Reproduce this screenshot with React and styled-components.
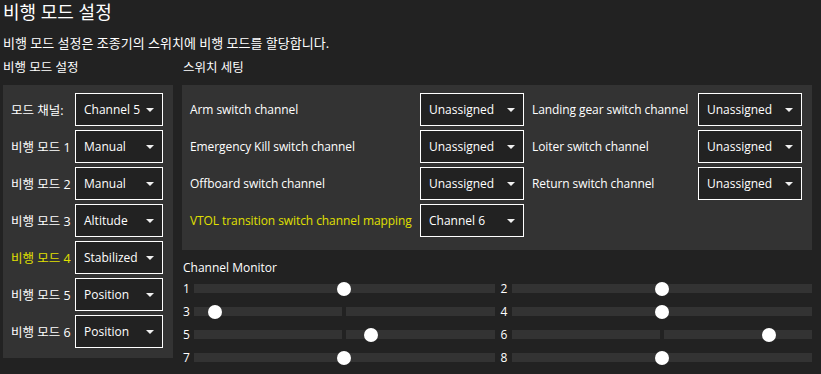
import React from "react";
import styled, { createGlobalStyle } from "styled-components";

const GlobalStyle = createGlobalStyle`
  body {
    margin: 0;
    background: #222222;
    color: #ffffff;
    font-family: "Open Sans", "Noto Sans CJK KR", sans-serif;
    font-size: 12px;
  }
`;

const Page = styled.div`
  padding: 0 3px;
`;

const Title = styled.h1`
  margin: 0;
  font-size: 18px;
  font-weight: 400;
  line-height: 24px;
`;

const Subtitle = styled.p`
  margin: 10px 0 7px;
  font-size: 13px;
  line-height: 18px;
`;

const Columns = styled.div`
  display: flex;
  gap: 9px;
  align-items: flex-start;
`;

const Column = styled.div`
  display: flex;
  flex-direction: column;
  width: ${(p) => p.$width}px;
`;

const SectionHeader = styled.div`
  font-size: 12.5px;
  line-height: 18px;
  margin-bottom: 8px;
  padding-left: ${(p) => (p.$indent ? 1 : 0)}px;
`;

const ModePanel = styled.div`
  background: #333333;
  padding: 8px 10px 10px 8px;
  display: grid;
  grid-template-columns: 1fr 88px;
  column-gap: 4px;
  row-gap: 4px;
  align-items: center;
`;

const SwitchPanel = styled.div`
  background: #333333;
  padding: 8px 10px 13px 8px;
  display: grid;
  grid-template-columns: 222px 104px 1fr 104px;
  column-gap: 8px;
  row-gap: 4px;
  align-items: center;
`;

const Label = styled.span`
  font-size: ${(p) => (p.$kr ? "12.5px" : "12px")};
  letter-spacing: ${(p) => (p.$kr ? "0" : "-0.08px")};
  color: ${(p) => (p.$highlight ? "#e0e000" : "#ffffff")};
  white-space: nowrap;
`;

const Select = styled.div`
  position: relative;
  box-sizing: border-box;
  height: 33px;
  border: 1px solid #ffffff;
  background: #222222;
  display: flex;
  align-items: center;
  padding: 0 8px;
  font-size: 12px;
  white-space: nowrap;

  &::after {
    content: "";
    position: absolute;
    right: 8px;
    top: 14px;
    border-left: 4px solid transparent;
    border-right: 4px solid transparent;
    border-top: 4px solid #f0f0f0;
  }
`;

const MonitorTitle = styled.div`
  margin: 9px 0 0 1px;
  line-height: 18px;
  font-size: 12px;
`;

const MonitorGrid = styled.div`
  margin-left: 1px;
  display: grid;
  grid-template-columns: 1fr 1fr;
  column-gap: 6px;
  grid-auto-rows: 23px;
`;

const MonitorCell = styled.div`
  display: flex;
  align-items: center;
`;

const ChannelNum = styled.span`
  width: 11px;
  flex: none;
  font-size: 12px;
`;

const Track = styled.div`
  position: relative;
  flex: 1;
  height: 9px;
  display: flex;
  gap: 4px;
`;

const TrackHalf = styled.div`
  flex: 1;
  background: #333333;
`;

const Thumb = styled.div`
  position: absolute;
  top: 50%;
  width: 14px;
  height: 14px;
  border-radius: 50%;
  background: #ffffff;
  transform: translate(-50%, -50%);
`;

const modes = [
  { label: "모드 채널:", value: "Channel 5" },
  { label: "비행 모드 1", value: "Manual" },
  { label: "비행 모드 2", value: "Manual" },
  { label: "비행 모드 3", value: "Altitude" },
  { label: "비행 모드 4", value: "Stabilized", highlight: true },
  { label: "비행 모드 5", value: "Position" },
  { label: "비행 모드 6", value: "Position" },
];

const switches = [
  ["Arm switch channel", "Unassigned", "Landing gear switch channel", "Unassigned"],
  ["Emergency Kill switch channel", "Unassigned", "Loiter switch channel", "Unassigned"],
  ["Offboard switch channel", "Unassigned", "Return switch channel", "Unassigned"],
];

const channels = [0.5, 0.5, 0.07, 0.5, 0.588, 0.857, 0.5, 0.5];

const App = () => (
  <Page>
    <GlobalStyle />
    <Title>비행 모드 설정</Title>
    <Subtitle>비행 모드 설정은 조종기의 스위치에 비행 모드를 할당합니다.</Subtitle>
    <Columns>
      <Column $width={170}>
        <SectionHeader>비행 모드 설정</SectionHeader>
        <ModePanel>
          {modes.map((m) => (
            <React.Fragment key={m.label}>
              <Label $kr $highlight={m.highlight}>
                {m.label}
              </Label>
              <Select>{m.value}</Select>
            </React.Fragment>
          ))}
        </ModePanel>
      </Column>
      <Column $width={630}>
        <SectionHeader $indent>스위치 세팅</SectionHeader>
        <SwitchPanel>
          {switches.map((row) => (
            <React.Fragment key={row[0]}>
              <Label>{row[0]}</Label>
              <Select>{row[1]}</Select>
              <Label>{row[2]}</Label>
              <Select>{row[3]}</Select>
            </React.Fragment>
          ))}
          <Label $highlight>VTOL transition switch channel mapping</Label>
          <Select>Channel 6</Select>
        </SwitchPanel>
        <MonitorTitle>Channel Monitor</MonitorTitle>
        <MonitorGrid>
          {channels.map((v, i) => (
            <MonitorCell key={i}>
              <ChannelNum>{i + 1}</ChannelNum>
              <Track>
                <TrackHalf />
                <TrackHalf />
                <Thumb style={{ left: `${v * 100}%` }} />
              </Track>
            </MonitorCell>
          ))}
        </MonitorGrid>
      </Column>
    </Columns>
  </Page>
);

export default App;
